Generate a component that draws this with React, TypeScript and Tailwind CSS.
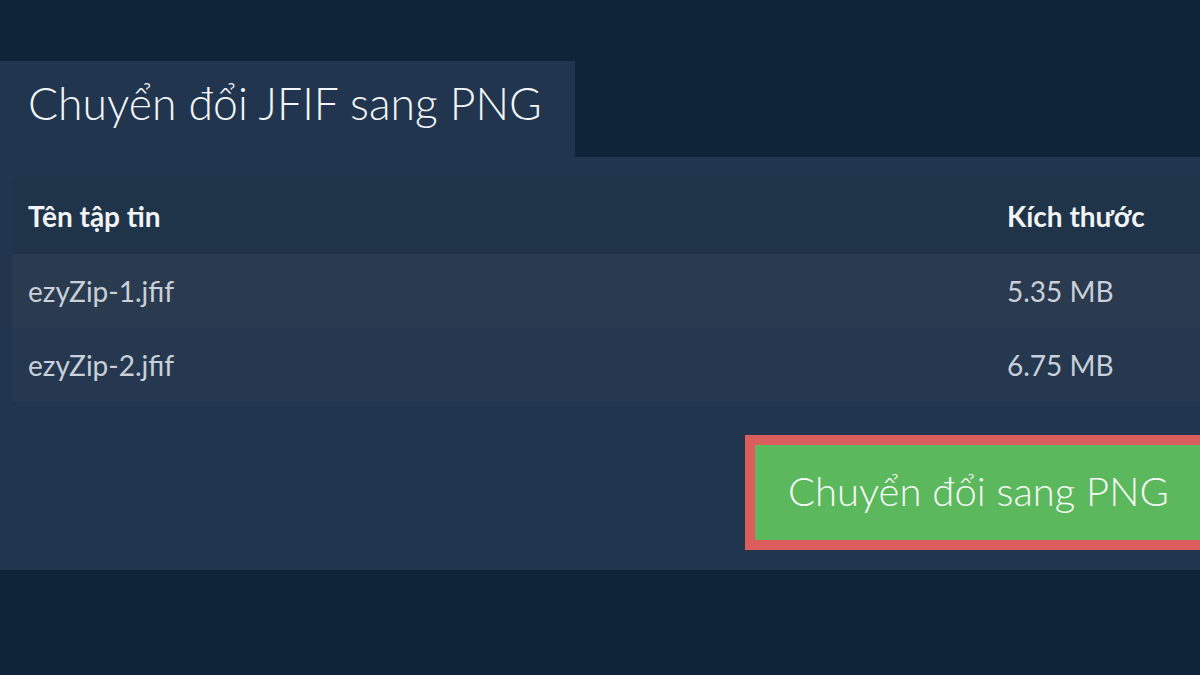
export default function App() {
  const rows = [
    { name: "ezyZip-1.jfif", size: "5.35 MB", bg: "bg-[#2a3a4f]" },
    { name: "ezyZip-2.jfif", size: "6.75 MB", bg: "bg-[#25384f]" },
  ];
  return (
    <div
      className="w-[1200px] h-[675px] bg-[#0f2339] overflow-hidden pt-[61px]"
      style={{ fontFamily: "Lato, 'Noto Sans', sans-serif" }}
    >
      <div className="w-[575px] h-[96px] bg-[#21364e] flex items-center pl-[28px] pb-[12px]">
        <h1 className="text-[44.5px] font-light text-[#f3f5f7] leading-none">
          Chuyển đổi JFIF sang PNG
        </h1>
      </div>
      <div className="h-[413px] bg-[#21364e] pt-[21px] overflow-hidden">
        <div className="ml-[12px]">
          <div className="h-[76px] bg-[#1f3349] flex items-center">
            <div className="w-[995px] pl-[16px] text-[28px] font-bold text-[#f1f3f5]">Tên tập tin</div>
            <div className="text-[28px] font-bold text-[#f1f3f5]">Kích thước</div>
          </div>
          {rows.map((r) => (
            <div key={r.name} className={`h-[74px] ${r.bg} flex items-center`}>
              <div className="w-[995px] pl-[16px] text-[28px] text-[#c9d0d9]">{r.name}</div>
              <div className="text-[28px] text-[#c9d0d9]">{r.size}</div>
            </div>
          ))}
        </div>
        <div className="flex mt-[33px] pl-[745px]">
          <button className="shrink-0 w-[469px] h-[115px] border-[10px] border-[#dc5e5c] bg-[#5cb85c] text-[#f7fbf7] text-[40px] font-light flex items-center pl-[33px] pb-[4px]">
            Chuyển đổi sang PNG
          </button>
        </div>
      </div>
    </div>
  );
}
